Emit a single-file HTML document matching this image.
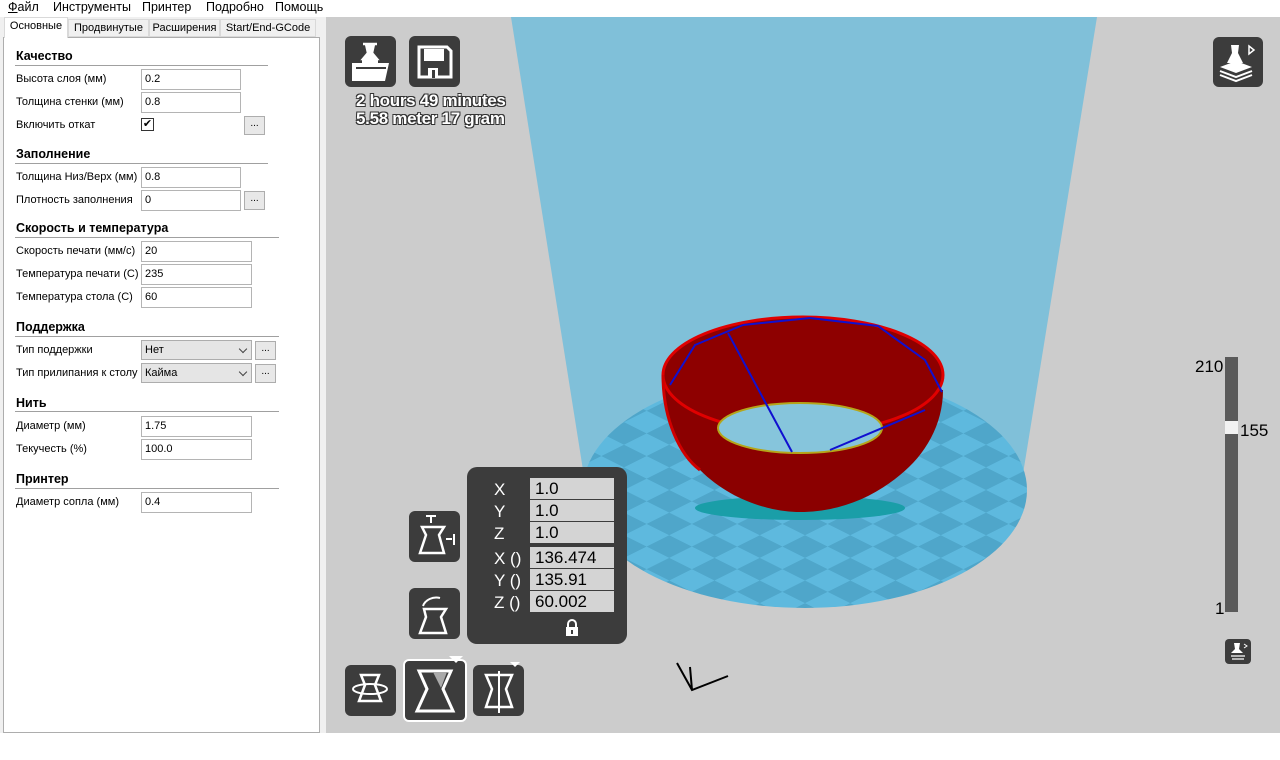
<!DOCTYPE html>
<html><head><meta charset="utf-8"><style>
*{margin:0;padding:0;box-sizing:border-box}
body{width:1280px;height:760px;background:#fff;font-family:"Liberation Sans","DejaVu Sans",sans-serif;position:relative;overflow:hidden;font-size:11px;color:#000}
.a{position:absolute}
.menu span{position:absolute;top:0;font-size:12.5px}
.tab{position:absolute;top:19px;height:18px;border:1px solid #d9d9d9;background:#f0f0f0;font-size:11px;line-height:16px;text-align:center}
.lbl{position:absolute;left:16px;font-size:11px}
.hd{position:absolute;left:16px;font-size:12.5px;font-weight:bold}
.ln{position:absolute;left:15px;height:1px;background:#a0a0a0}
.in{position:absolute;height:21px;border:1px solid #b4b4b4;background:#fff;font-size:11px;padding-left:3px;line-height:19px}
.bt{position:absolute;width:21px;height:19px;border:1px solid #adadad;background:#e8e8e8;font-size:10px;text-align:center;line-height:14px}
.sel{position:absolute;height:20px;border:1px solid #adadad;background:#e5e5e5;font-size:11px;padding-left:3px;line-height:18px}
.sel:after{content:"";position:absolute;right:5px;top:5px;width:5px;height:5px;border-right:1.5px solid #444;border-bottom:1.5px solid #444;transform:rotate(45deg)}
.ic{position:absolute;background:#3c3c3c;border-radius:6px}
.f{position:absolute;left:530px;width:84px;height:21px;background:#d4d4d4;font-size:17px;line-height:21px;padding-left:5px}
.fl{position:absolute;color:#fff;font-size:17px;left:494px}
.tt{position:absolute;color:#fff;font-size:17px;font-weight:bold;letter-spacing:-0.3px;text-shadow:-1px -1px 0 #333,1px -1px 0 #333,-1px 1px 0 #333,1px 1px 0 #333}
</style></head><body>
<div class="menu">
<span style="left:8px"><u>Ф</u>айл</span><span style="left:53px">Инструменты</span><span style="left:142px">Принтер</span><span style="left:206px">Подробно</span><span style="left:275px">Помощь</span>
</div>
<div class="a" style="left:0;top:17px;width:326px;height:716px;background:#f0f0f0"></div>
<div class="a" style="left:3px;top:37px;width:317px;height:696px;background:#fff;border:1px solid #adadad"></div>
<div class="tab" style="left:4px;top:17px;width:64px;height:21px;background:#fff;border-bottom:none">Основные</div>
<div class="tab" style="left:68px;width:81px">Продвинутые</div>
<div class="tab" style="left:149px;width:71px">Расширения</div>
<div class="tab" style="left:220px;width:96px">Start/End-GCode</div>

<div class="hd" style="top:49px">Качество</div><div class="ln" style="top:65px;width:253px"></div>
<div class="lbl" style="top:73px">Высота слоя (мм)</div><div class="in" style="left:141px;top:69px;width:100px">0.2</div>
<div class="lbl" style="top:96px">Толщина стенки (мм)</div><div class="in" style="left:141px;top:92px;width:100px">0.8</div>
<div class="lbl" style="top:119px">Включить откат</div>
<div class="a" style="left:141px;top:118px;width:13px;height:13px;border:1px solid #333;font-size:11px;line-height:11px;text-align:center">✔</div>
<div class="bt" style="left:244px;top:116px">...</div>

<div class="hd" style="top:147px">Заполнение</div><div class="ln" style="top:163px;width:253px"></div>
<div class="lbl" style="top:171px">Толщина Низ/Верх (мм)</div><div class="in" style="left:141px;top:167px;width:100px">0.8</div>
<div class="lbl" style="top:194px">Плотность заполнения</div><div class="in" style="left:141px;top:190px;width:100px">0</div>
<div class="bt" style="left:244px;top:191px">...</div>

<div class="hd" style="top:221px">Скорость и температура</div><div class="ln" style="top:237px;width:264px"></div>
<div class="lbl" style="top:245px">Скорость печати (мм/с)</div><div class="in" style="left:141px;top:241px;width:111px">20</div>
<div class="lbl" style="top:268px">Температура печати (С)</div><div class="in" style="left:141px;top:264px;width:111px">235</div>
<div class="lbl" style="top:291px">Температура стола (С)</div><div class="in" style="left:141px;top:287px;width:111px">60</div>

<div class="hd" style="top:320px">Поддержка</div><div class="ln" style="top:336px;width:264px"></div>
<div class="lbl" style="top:344px">Тип поддержки</div><div class="sel" style="left:141px;top:340px;width:111px">Нет</div><div class="bt" style="left:255px;top:341px">...</div>
<div class="lbl" style="top:367px">Тип прилипания к столу</div><div class="sel" style="left:141px;top:363px;width:111px">Кайма</div><div class="bt" style="left:255px;top:364px">...</div>

<div class="hd" style="top:396px">Нить</div><div class="ln" style="top:411px;width:264px"></div>
<div class="lbl" style="top:420px">Диаметр (мм)</div><div class="in" style="left:141px;top:416px;width:111px">1.75</div>
<div class="lbl" style="top:443px">Текучесть (%)</div><div class="in" style="left:141px;top:439px;width:111px">100.0</div>

<div class="hd" style="top:472px">Принтер</div><div class="ln" style="top:488px;width:264px"></div>
<div class="lbl" style="top:496px">Диаметр сопла (мм)</div><div class="in" style="left:141px;top:492px;width:111px">0.4</div>

<!-- viewport -->
<svg class="a" style="left:326px;top:17px" width="954" height="716" viewBox="326 17 954 716">
<defs>
<pattern id="ck" width="64" height="64" patternUnits="userSpaceOnUse" patternTransform="translate(805,490) scale(1,0.5) rotate(45)">
<rect width="64" height="64" fill="#5eb9de"/><rect width="32" height="32" fill="#4fa6ca"/><rect x="32" y="32" width="32" height="32" fill="#4fa6ca"/>
</pattern>
</defs>
<rect x="326" y="17" width="954" height="716" fill="#cccccc"/>
<path d="M511 17 L1097 17 L1022 480 L583 470 Z" fill="#80c0d9"/>
<ellipse cx="805" cy="490" rx="222" ry="118" fill="url(#ck)"/>
<!-- bowl -->
<ellipse cx="800" cy="508" rx="105" ry="12" fill="#1a9ea8"/>
<path d="M663 375 C663 420 680 455 700 470 C730 500 770 512 800 512 C835 512 870 500 900 475 C925 455 943 425 943 390 Z" fill="#8b0000"/>
<ellipse cx="803" cy="375" rx="140" ry="58" fill="#8e0000"/>
<ellipse cx="803" cy="375" rx="140" ry="58" fill="none" stroke="#e00000" stroke-width="3"/>
<path d="M663 375 C663 420 680 455 700 470" stroke="#d00000" stroke-width="3" fill="none"/>
<ellipse cx="800" cy="428" rx="82" ry="25" fill="#86c5dc" stroke="#b5a51a" stroke-width="2"/>
<path d="M743 325 L695 345 L670 385 M728 333 L792 452 M810 318 L878 326 L925 360 L942 392 M925 410 L830 450" stroke="#1010d0" stroke-width="2" fill="none"/>
<path d="M743 325 L810 318" stroke="#1010d0" stroke-width="2"/>
<!-- axes -->
<path d="M677 663 L692 690 L728 676 M692 690 L690 667" stroke="#000" stroke-width="2" fill="none"/>
<!-- slider -->
<rect x="1225" y="357" width="13" height="255" fill="#5a5a5a"/>
<rect x="1225" y="421" width="13" height="13" fill="#f2f2f2"/>
</svg>
<div class="a" style="left:1195px;top:357px;font-size:17px">210</div>
<div class="a" style="left:1240px;top:421px;font-size:17px">155</div>
<div class="a" style="left:1215px;top:599px;font-size:17px">1</div>
<div class="ic" style="left:1225px;top:639px;width:26px;height:25px;border-radius:4px"></div>
<svg class="a" style="left:1225px;top:639px" width="26" height="25"><path d="M9 4h6l-1 6 4 4H6l4-4z" fill="#fff"/><path d="M6 17h14M7 20h12" stroke="#fff" stroke-width="1.3"/><path d="M19 5l3 2-3 2" stroke="#fff" fill="none"/></svg>

<!-- top icons -->
<div class="ic" style="left:345px;top:36px;width:51px;height:51px"></div>
<svg class="a" style="left:345px;top:36px" width="51" height="51"><path d="M18 8h14M21 8l2 9-5 6h14l-5-6 2-9" stroke="#fff" stroke-width="2.5" fill="#fff"/><path d="M7 27h10v-3h16v3h11l-4 18H7z" fill="#fff"/><path d="M11 32h30" stroke="#3c3c3c" stroke-width="2"/></svg>
<div class="ic" style="left:409px;top:36px;width:51px;height:51px"></div>
<svg class="a" style="left:409px;top:36px" width="51" height="51"><path d="M10 11h28l4 4v26H10z" fill="none" stroke="#fff" stroke-width="3"/><path d="M15 13h20v12H15z" fill="#fff"/><rect x="19" y="32" width="10" height="10" fill="#fff"/><rect x="23" y="34" width="3" height="8" fill="#3c3c3c"/></svg>
<div class="tt" style="left:356px;top:91px">2 hours 49 minutes</div>
<div class="tt" style="left:356px;top:109px">5.58 meter 17 gram</div>

<div class="ic" style="left:1213px;top:37px;width:50px;height:50px"></div>
<svg class="a" style="left:1213px;top:37px" width="50" height="50"><path d="M15 8h12M18 8l1 8-5 10h16l-5-10 1-8z" fill="#fff"/><path d="M7 30l16-6 16 6-16 6z" fill="#fff"/><path d="M7 34l16 6 16-6M7 38l16 6 16-6" stroke="#fff" stroke-width="2" fill="none"/><path d="M36 9l5 4-5 4z" fill="none" stroke="#fff" stroke-width="1.5"/></svg>

<!-- info panel -->
<div class="ic" style="left:467px;top:467px;width:160px;height:177px;border-radius:10px"></div>
<div class="fl" style="top:480px">X</div><div class="f" style="top:478px">1.0</div>
<div class="fl" style="top:502px">Y</div><div class="f" style="top:500px">1.0</div>
<div class="fl" style="top:524px">Z</div><div class="f" style="top:522px">1.0</div>
<div class="fl" style="top:549px">X ()</div><div class="f" style="top:547px">136.474</div>
<div class="fl" style="top:571px">Y ()</div><div class="f" style="top:569px">135.91</div>
<div class="fl" style="top:593px">Z ()</div><div class="f" style="top:591px">60.002</div>
<svg class="a" style="left:564px;top:619px" width="16" height="18"><path d="M4 8V5a4 4 0 0 1 8 0v3" stroke="#fff" stroke-width="2" fill="none"/><rect x="2" y="8" width="12" height="9" fill="#fff"/><rect x="7" y="11" width="2" height="4" fill="#3c3c3c"/></svg>

<!-- left tool icons -->
<div class="ic" style="left:409px;top:511px;width:51px;height:51px"></div>
<svg class="a" style="left:409px;top:511px" width="51" height="51"><path d="M17 5h10M22 6v6" stroke="#fff" stroke-width="2"/><path d="M13 16h22l-5 8 5 18H11l6-18z" fill="none" stroke="#fff" stroke-width="2.5"/><path d="M37 28h6M45 23v11" stroke="#fff" stroke-width="2"/></svg>
<div class="ic" style="left:409px;top:588px;width:51px;height:51px"></div>
<svg class="a" style="left:409px;top:588px" width="51" height="51"><path d="M14 18c2-6 10-10 17-8" stroke="#fff" stroke-width="2" fill="none"/><path d="M15 21h22l-5 8 5 16H11l6-16z" fill="none" stroke="#fff" stroke-width="2.5"/></svg>

<!-- bottom icons -->
<div class="ic" style="left:345px;top:665px;width:51px;height:51px"></div>
<svg class="a" style="left:345px;top:665px" width="51" height="51"><path d="M16 10h18l-4 10 6 16H14l6-16z" fill="none" stroke="#fff" stroke-width="2.5"/><ellipse cx="25" cy="24" rx="17" ry="5" fill="none" stroke="#fff" stroke-width="2"/></svg>
<div class="ic" style="left:403px;top:659px;width:64px;height:63px;border:2px solid #fff"></div>
<svg class="a" style="left:403px;top:655px" width="64" height="67"><path d="M46 1h14l-7 7z" fill="#fff"/><path d="M16 16h32l-8 18 10 22H14l10-22z" fill="none" stroke="#fff" stroke-width="3"/><path d="M30 17l14 0-6 16z" fill="#aaa"/></svg>
<div class="ic" style="left:473px;top:665px;width:51px;height:51px"></div>
<svg class="a" style="left:473px;top:661px" width="51" height="55"><path d="M37 1h10l-5 5z" fill="#fff"/><path d="M13 14h26l-6 14 6 18H13l6-18z" fill="none" stroke="#fff" stroke-width="2.5"/><path d="M26 10v42" stroke="#fff" stroke-width="2"/></svg>
</body></html>
